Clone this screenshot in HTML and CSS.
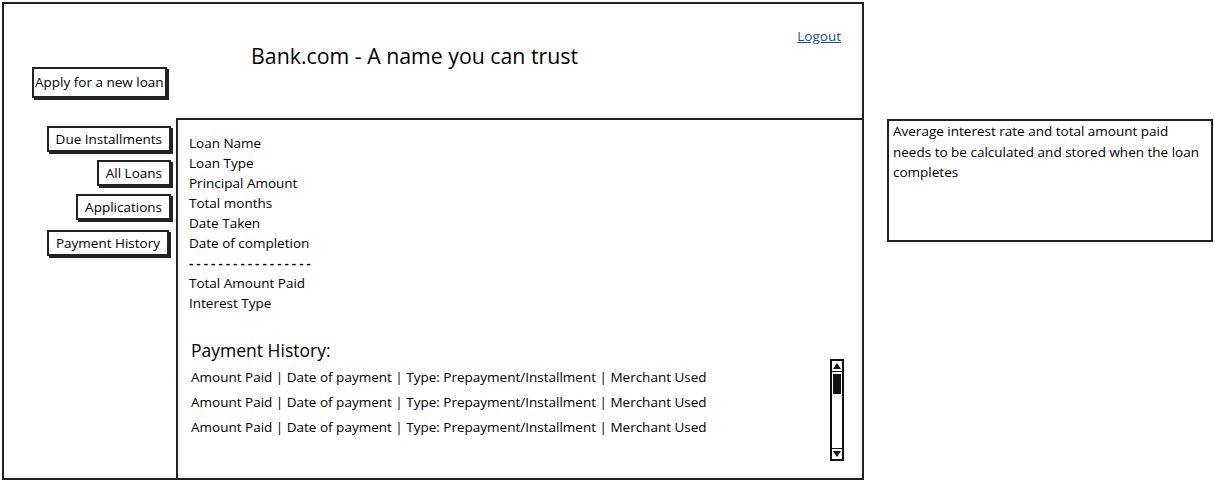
FILE: index.html
```html
<!DOCTYPE html>
<html lang="en">
<head>
    <meta charset="UTF-8">
    <meta name="viewport" content="width=device-width, initial-scale=1.0">
    <title>Bank.com - Loan Details</title>
    <link rel="stylesheet" href="styles.css">
</head>
<body>
    <div class="frame">
        <div class="header">
            <button class="button apply">Apply for a new loan</button>
            <h1 class="title">Bank.com - A name you can trust</h1>
            <a class="logout" href="#">Logout</a>
        </div>

        <div class="main">
            <div class="sidebar">
                <button class="button">Due Installments</button>
                <button class="button">All Loans</button>
                <button class="button">Applications</button>
                <button class="button last">Payment History</button>
            </div>

            <div class="panel">
                <ul class="fields">
                    <li>Loan Name</li>
                    <li>Loan Type</li>
                    <li>Principal Amount</li>
                    <li>Total months</li>
                    <li>Date Taken</li>
                    <li>Date of completion</li>
                    <li class="divider">-----------------</li>
                    <li>Total Amount Paid</li>
                    <li>Interest Type</li>
                </ul>

                <div class="history">
                    <div class="history-list">
                        <h2>Payment History:</h2>
                        <div class="row">Amount Paid | Date of payment | Type: Prepayment/Installment | Merchant Used</div>
                        <div class="row">Amount Paid | Date of payment | Type: Prepayment/Installment | Merchant Used</div>
                        <div class="row">Amount Paid | Date of payment | Type: Prepayment/Installment | Merchant Used</div>
                    </div>
                    <div class="scrollbar">
                        <div class="arrow up"></div>
                        <div class="track"><div class="thumb"></div></div>
                        <div class="arrow down"></div>
                    </div>
                </div>
            </div>
        </div>
    </div>

    <div class="note">
        Average interest rate and total amount paid needs to be calculated and stored when the loan completes
    </div>
</body>
</html>
```

FILE: styles.css
```css
:root {
    --line-color: #222;
    --text-color: #000;
    --link-color: #1a4f9c;
}

body {
    font-family: 'Open Sans', 'DejaVu Sans', sans-serif;
    font-size: 13.5px;
    margin: 0;
    padding: 2px 0 0 2px;
    color: var(--text-color);
    background-color: #ffffff;
    display: flex;
    align-items: flex-start;
}

.frame {
    width: 862px;
    height: 478px;
    box-sizing: border-box;
    border: 2px solid var(--line-color);
    display: flex;
    flex-direction: column;
}

.header {
    height: 115px;
    display: flex;
    align-items: flex-start;
    flex-shrink: 0;
}

.button {
    font-family: inherit;
    font-size: 13.5px;
    color: var(--text-color);
    background-color: #fff;
    border: 2px solid var(--line-color);
    box-shadow: 2px 2px 0 var(--line-color);
    padding: 0 6px;
    height: 25px;
    line-height: 21px;
    cursor: pointer;
}

.apply {
    margin: 63px 0 0 28px;
    height: 31px;
    padding: 0 1px;
}

.title {
    width: 496px;
    margin: 38px 0 0 0;
    text-align: center;
    font-size: 21.3px;
    font-weight: normal;
    line-height: 28px;
}

.logout {
    margin: 23px 21px 0 auto;
    color: var(--link-color);
    font-size: 13.5px;
}

.main {
    flex: 1;
    display: flex;
}

.sidebar {
    width: 172px;
    flex-shrink: 0;
    display: flex;
    flex-direction: column;
    align-items: flex-end;
    gap: 8px;
    padding: 7px 5px 0 0;
    box-sizing: border-box;
}

.sidebar .button {
    height: 26px;
    padding: 0 7px;
}

.sidebar .last {
    margin-top: 2px;
    margin-right: 2px;
}

.panel {
    flex: 1;
    border: 2px solid var(--line-color);
    margin: -1px -2px -2px 0;
    padding: 13px 18px 0 11px;
}

.fields {
    list-style: none;
    margin: 0;
    padding: 0;
}

.fields li {
    line-height: 20px;
}

.fields .divider {
    font-weight: 600;
    letter-spacing: 3px;
}

.history {
    display: flex;
    align-items: flex-start;
    margin-top: 26px;
}

.history-list {
    flex: 1;
    padding-left: 2px;
}

.history h2 {
    font-size: 17.5px;
    font-weight: normal;
    line-height: 22px;
    margin: 0 0 4px 0;
}

.row {
    line-height: 25px;
}

.scrollbar {
    width: 14px;
    height: 102px;
    margin-top: 20px;
    border: 2px solid #111;
    box-sizing: border-box;
    display: flex;
    flex-direction: column;
}

.arrow {
    height: 10px;
    border-bottom: 1.5px solid #111;
    position: relative;
}

.arrow.down {
    border-bottom: none;
    border-top: 1.5px solid #111;
}

.arrow::after {
    content: "";
    position: absolute;
    left: 1px;
    top: 2px;
    border-left: 4px solid transparent;
    border-right: 4px solid transparent;
}

.arrow.up::after {
    border-bottom: 6px solid #111;
}

.arrow.down::after {
    border-top: 6px solid #111;
}

.track {
    flex: 1;
    padding: 2px 1px 0 1px;
}

.thumb {
    height: 20px;
    background-color: #111;
}

.note {
    width: 326px;
    height: 123px;
    box-sizing: border-box;
    margin: 117px 0 0 23px;
    border: 2px solid var(--line-color);
    padding: 0 4px;
    line-height: 20.5px;
}
```
